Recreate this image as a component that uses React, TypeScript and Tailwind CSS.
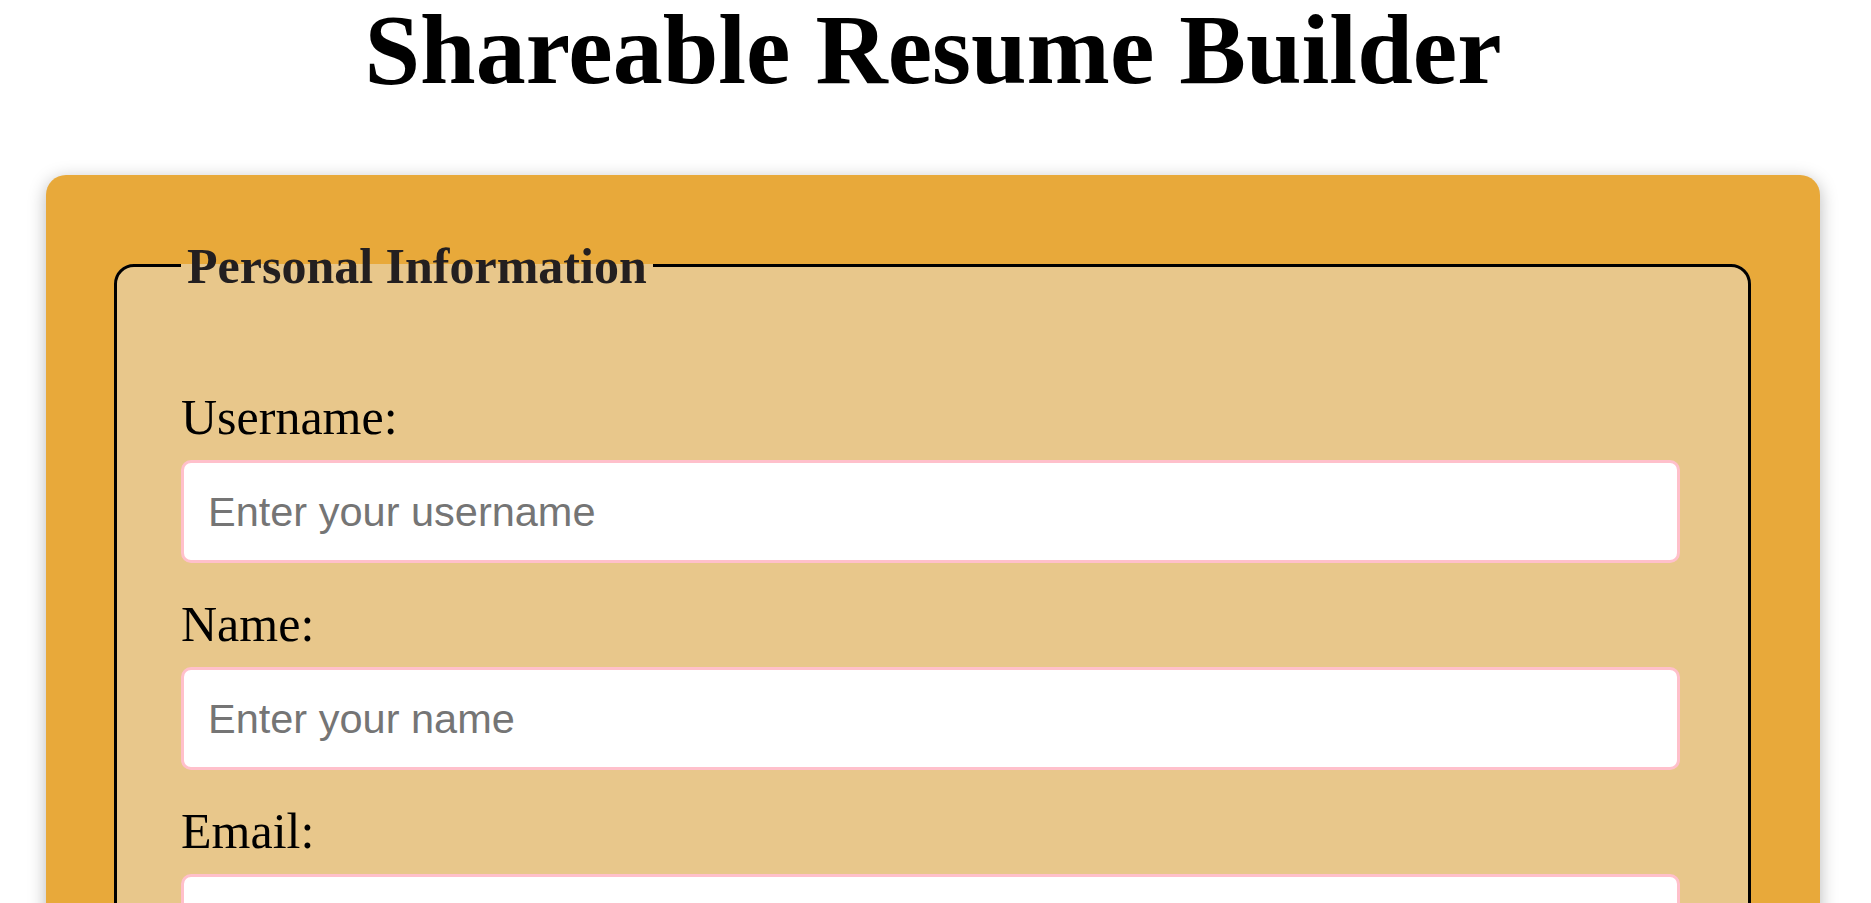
import React from 'react';

const fields = [
  { id: 'username', label: 'Username:', placeholder: 'Enter your username', type: 'text' },
  { id: 'name', label: 'Name:', placeholder: 'Enter your name', type: 'text' },
  { id: 'email', label: 'Email:', placeholder: 'Enter your email', type: 'email' },
];

export default function App() {
  return (
    <div className="min-h-screen bg-white font-['Liberation_Serif','Times_New_Roman',serif] text-black">
      <div className="ml-[46px] mr-[51px] pb-[60px]">
        <h1 className="text-center text-[100px] leading-[100px] font-bold">Shareable Resume Builder</h1>

        {/* Form card */}
        <form className="mt-[75px] rounded-[20px] bg-[#e8a93a] pl-[68px] pr-[69px] pt-[61px] pb-[68px] shadow-[0_4px_18px_rgba(0,0,0,0.28)]">
          <fieldset className="rounded-[20px] border-[3px] border-black bg-[#e8c78b] pl-[64px] pr-[68px] pt-[94px] pb-[60px]">
            <legend className="px-[6px] pt-[2px] text-[50px] leading-[57px] font-bold text-[#231f20]">Personal Information</legend>

            <div className="flex flex-col gap-[33px]">
              {fields.map((f) => (
                <div key={f.id} className="flex flex-col gap-[14px]">
                  <label htmlFor={f.id} className="block text-[50px] leading-[57px]">
                    {f.label}
                  </label>
                  <input
                    id={f.id}
                    type={f.type}
                    placeholder={f.placeholder}
                    className="h-[103px] w-full rounded-[10px] border-[3px] border-[#ffc0cb] bg-white px-[24px] font-['Liberation_Sans',Arial,sans-serif] text-[41.5px] text-black outline-none placeholder:text-[#757575]"
                  />
                </div>
              ))}
            </div>
          </fieldset>
        </form>
      </div>
    </div>
  );
}
